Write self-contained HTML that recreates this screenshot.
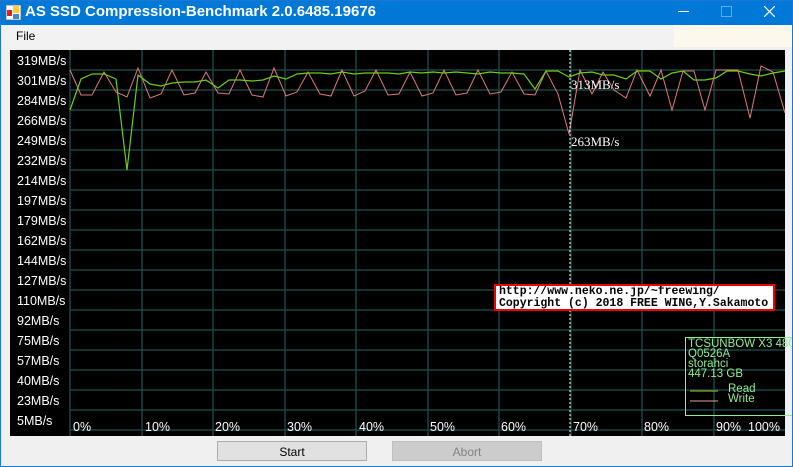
<!DOCTYPE html>
<html><head><style>
body{margin:0;width:793px;height:467px;overflow:hidden;background:#f0f0f0;font-family:"Liberation Sans",sans-serif;position:relative}
.tb{position:absolute;left:0;top:0;width:793px;height:25px;background:#0078d7;color:#fff}
.tb .t{position:absolute;left:25px;top:3px;font-size:15px;font-weight:bold}
.menu{position:absolute;left:1px;top:25px;width:791px;height:22px;background:#f2f2f2}
.menu span{position:absolute;left:15px;top:4px;font-size:12px}
.cream{position:absolute;left:674px;top:25px;width:118px;height:22px;background:#fdf8ec}
.border{position:absolute;left:0;top:0;width:791px;height:465px;border:1px solid #1a78d0;pointer-events:none}
.chart{position:absolute;left:10px;top:50px;width:775px;height:386px;background:#000}
.lab{position:absolute;left:17px;color:#fff;font-size:12.5px}
.pct{position:absolute;top:420px;color:#fff;font-size:12.5px}
.btn{position:absolute;top:441px;height:20px;width:150px;background:#e1e1e1;border:1px solid #adadad;font-size:12px;text-align:center;line-height:20px;box-sizing:border-box}
.cp{position:absolute;left:494px;top:284px;width:281px;height:27px;background:#fff;border:2px solid #e00;box-sizing:border-box;font-family:"Liberation Mono",monospace;font-size:11.5px;line-height:12px;padding:0 3px;font-weight:bold;white-space:nowrap;overflow:hidden}
.lg{position:absolute;left:685px;top:337px;width:110px;height:79px;border:1px solid #90ee90;box-sizing:border-box;color:#90ee90;font-size:11.5px;line-height:10px;padding:1px 2px;white-space:nowrap;overflow:hidden}
</style></head><body>
<div class="tb"><svg style="position:absolute;left:6px;top:5px" width="15" height="15"><rect x="0" y="0" width="15" height="15" fill="#fff" stroke="#889"/><rect x="1" y="5" width="5" height="6" fill="#d22"/><rect x="7" y="1" width="6" height="7" fill="#fc3"/><rect x="7" y="9" width="6" height="5" fill="#48c"/></svg><span class="t">AS SSD Compression-Benchmark 2.0.6485.19676</span>
<span style="position:absolute;left:678px;top:11px;width:11px;height:1px;background:#fff"></span>
<span style="position:absolute;left:721px;top:6px;width:9px;height:9px;border:1px solid #6aa8e8"></span>
<svg style="position:absolute;left:764px;top:6px" width="11" height="11"><path d="M0 0L11 11M11 0L0 11" stroke="#fff" stroke-width="1.2"/></svg></div>
<div class="menu"><span>File</span></div><div class="cream"></div>
<div class="chart"></div>
<svg style="position:absolute;left:0;top:0" width="793" height="467">
<g stroke="#1d4444" stroke-width="1.5">
<line x1="70" y1="70" x2="785" y2="70"/><line x1="70" y1="90" x2="785" y2="90"/><line x1="70" y1="110" x2="785" y2="110"/><line x1="70" y1="130" x2="785" y2="130"/><line x1="70" y1="150" x2="785" y2="150"/><line x1="70" y1="170" x2="785" y2="170"/><line x1="70" y1="190" x2="785" y2="190"/><line x1="70" y1="210" x2="785" y2="210"/><line x1="70" y1="230" x2="785" y2="230"/><line x1="70" y1="250" x2="785" y2="250"/><line x1="70" y1="270" x2="785" y2="270"/><line x1="70" y1="290" x2="785" y2="290"/><line x1="70" y1="310" x2="785" y2="310"/><line x1="70" y1="330" x2="785" y2="330"/><line x1="70" y1="350" x2="785" y2="350"/><line x1="70" y1="370" x2="785" y2="370"/><line x1="70" y1="390" x2="785" y2="390"/><line x1="70" y1="410" x2="785" y2="410"/><line x1="70" y1="430" x2="785" y2="430"/>
<line x1="70" y1="50" x2="70" y2="436"/><line x1="142" y1="50" x2="142" y2="436"/><line x1="213" y1="50" x2="213" y2="436"/><line x1="285" y1="50" x2="285" y2="436"/><line x1="356" y1="50" x2="356" y2="436"/><line x1="428" y1="50" x2="428" y2="436"/><line x1="499" y1="50" x2="499" y2="436"/><line x1="571" y1="50" x2="571" y2="436"/><line x1="642" y1="50" x2="642" y2="436"/><line x1="714" y1="50" x2="714" y2="436"/>
</g>
<polyline fill="none" stroke="#e07878" stroke-width="1" points="70,70 81,95 92,95 104,72 116,92 127,97 138,68 150,98 161,94 172,70 184,95 195,93 206,72 218,93 229,94 240,70 252,95 263,97 274,68 286,96 297,92 308,72 320,94 331,96 342,70 354,96 365,91 376,70 388,95 399,94 410,72 422,96 433,93 444,70 456,95 467,93 478,70 490,94 501,92 512,72 524,94 535,95 546,71 558,94 569,134 580,70 592,94 603,72 614,90 626,98 637,70 650,96 661,70 672,110 683,71 694,71 705,110 716,70 727,70 738,70 750,118 761,66 773,72 785,113"/>
<polyline fill="none" stroke="#6ad010" stroke-width="1.2" points="70,110 81,79 92,74 104,74 116,79 127,170 138,75 150,84 161,86 172,83 184,82 195,82 206,80 218,88 229,80 240,80 252,81 263,80 274,76 286,79 297,74 308,73 320,73 331,74 342,72 354,74 365,73 376,73 388,73 399,74 410,72 422,73 433,72 444,73 456,72 467,73 478,74 490,72 501,73 512,73 524,74 535,89 546,71 558,71 569,77 580,73 592,72 603,75 614,75 626,79 637,71 650,71 661,79 672,73 683,71 694,80 705,80 716,78 727,71 738,71 750,74 761,76 773,73 785,71"/>
<line x1="570" y1="50" x2="570" y2="436" stroke="#fff" stroke-dasharray="2,2"/>
<line x1="690" y1="391" x2="718" y2="391" stroke="#9acd32"/>
<line x1="690" y1="401" x2="718" y2="401" stroke="#e8a0a0"/>
</svg>
<div class="lab" style="top:54px">319MB/s</div><div class="lab" style="top:74px">301MB/s</div><div class="lab" style="top:94px">284MB/s</div><div class="lab" style="top:114px">266MB/s</div><div class="lab" style="top:134px">249MB/s</div><div class="lab" style="top:154px">232MB/s</div><div class="lab" style="top:174px">214MB/s</div><div class="lab" style="top:194px">197MB/s</div><div class="lab" style="top:214px">179MB/s</div><div class="lab" style="top:234px">162MB/s</div><div class="lab" style="top:254px">144MB/s</div><div class="lab" style="top:274px">127MB/s</div><div class="lab" style="top:294px">110MB/s</div><div class="lab" style="top:314px">92MB/s</div><div class="lab" style="top:334px">75MB/s</div><div class="lab" style="top:354px">57MB/s</div><div class="lab" style="top:374px">40MB/s</div><div class="lab" style="top:394px">23MB/s</div><div class="lab" style="top:414px">5MB/s</div>
<div class="pct" style="left:73px">0%</div><div class="pct" style="left:145px">10%</div><div class="pct" style="left:215px">20%</div><div class="pct" style="left:287px">30%</div><div class="pct" style="left:359px">40%</div><div class="pct" style="left:430px">50%</div><div class="pct" style="left:501px">60%</div><div class="pct" style="left:573px">70%</div><div class="pct" style="left:644px">80%</div><div class="pct" style="left:716px">90%</div><div class="pct" style="left:748px">100%</div>
<div style="position:absolute;left:571px;top:77px;color:#fff;font-family:'Liberation Serif',serif;font-size:13px">313MB/s</div>
<div style="position:absolute;left:571px;top:134px;color:#fff;font-family:'Liberation Serif',serif;font-size:13px">263MB/s</div>
<div class="cp">http://www.neko.ne.jp/~freewing/<br>Copyright (c) 2018 FREE WING,Y.Sakamoto</div>
<div class="lg">TCSUNBOW X3 480<br>Q0526A<br>storahci<br>447.13 GB<br><div style="margin:5px 0 0 40px">Read</div><div style="margin-left:40px">Write</div></div>
<div class="btn" style="left:217px">Start</div>
<div class="btn" style="left:392px;background:#cccccc;border-color:#bfbfbf;color:#838383">Abort</div>
<div class="border"></div>
</body></html>
